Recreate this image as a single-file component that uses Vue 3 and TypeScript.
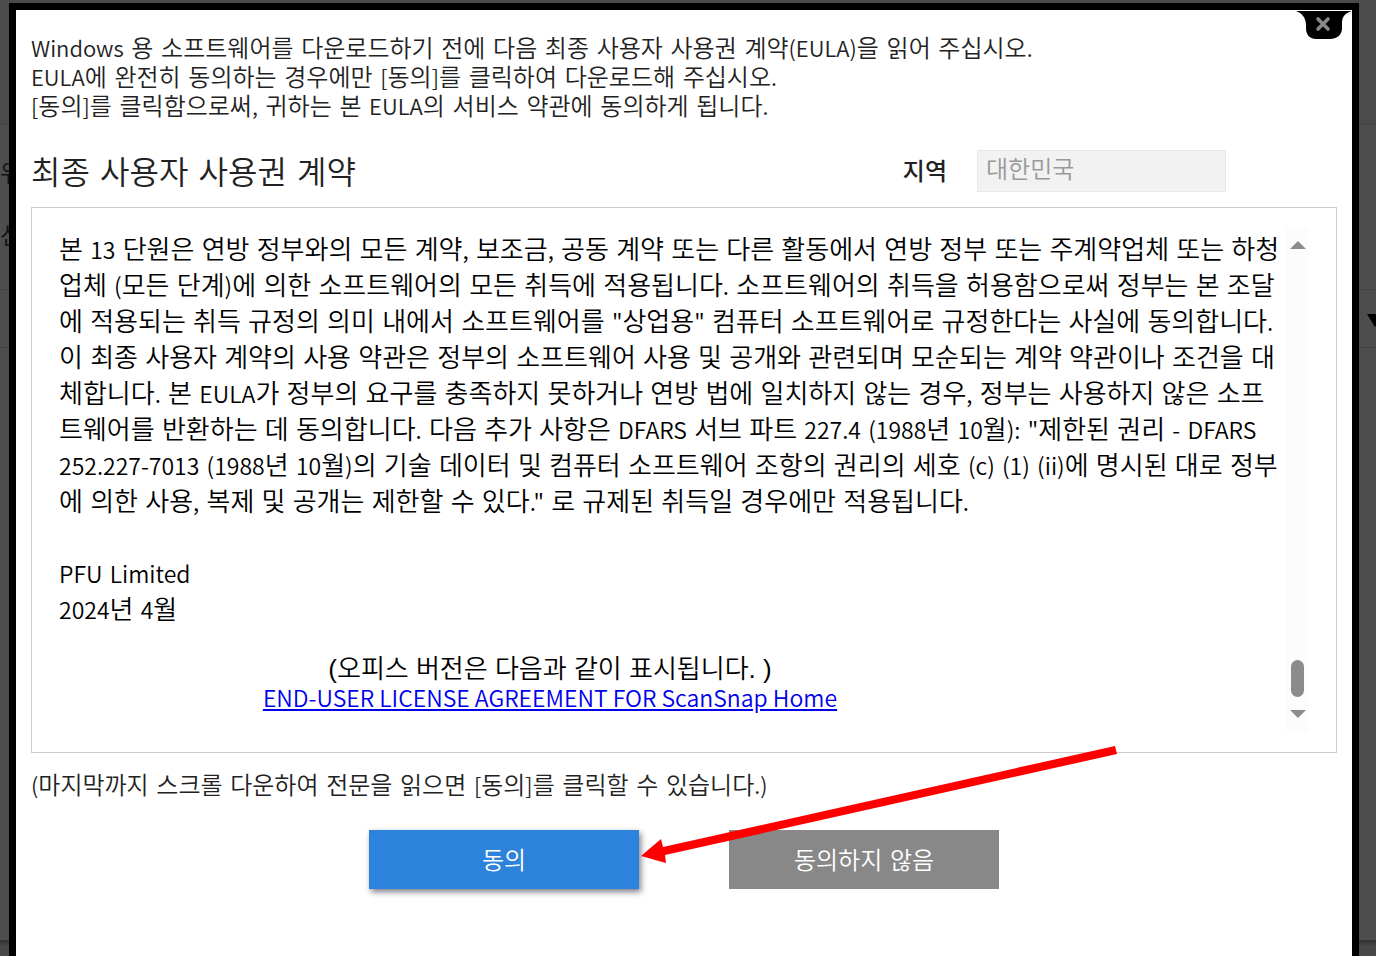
<script setup lang="ts">
import { ref } from 'vue'

interface Run {
  text: string
  latin: boolean
}

// Splits a line into Hangul and Latin runs so each script gets its own size.
function toRuns(line: string): Run[] {
  return (line.match(/[\uAC00-\uD7A3\s]+|[^\uAC00-\uD7A3\s]+/g) ?? []).map((text) => ({
    text,
    latin: !/[\uAC00-\uD7A3\s]/.test(text),
  }))
}

const introLines = [
  'Windows 용 소프트웨어를 다운로드하기 전에 다음 최종 사용자 사용권 계약(EULA)을 읽어 주십시오.',
  'EULA에 완전히 동의하는 경우에만 [동의]를 클릭하여 다운로드해 주십시오.',
  '[동의]를 클릭함으로써, 귀하는 본 EULA의 서비스 약관에 동의하게 됩니다.',
].map(toRuns)

const agreementLines = [
  '본 13 단원은 연방 정부와의 모든 계약, 보조금, 공동 계약 또는 다른 활동에서 연방 정부 또는 주계약업체 또는 하청',
  '업체 (모든 단계)에 의한 소프트웨어의 모든 취득에 적용됩니다. 소프트웨어의 취득을 허용함으로써 정부는 본 조달',
  '에 적용되는 취득 규정의 의미 내에서 소프트웨어를 "상업용" 컴퓨터 소프트웨어로 규정한다는 사실에 동의합니다.',
  '이 최종 사용자 계약의 사용 약관은 정부의 소프트웨어 사용 및 공개와 관련되며 모순되는 계약 약관이나 조건을 대',
  '체합니다. 본 EULA가 정부의 요구를 충족하지 못하거나 연방 법에 일치하지 않는 경우, 정부는 사용하지 않은 소프',
  '트웨어를 반환하는 데 동의합니다. 다음 추가 사항은 DFARS 서브 파트 227.4 (1988년 10월): "제한된 권리 - DFARS',
  '252.227-7013 (1988년 10월)의 기술 데이터 및 컴퓨터 소프트웨어 조항의 권리의 세호 (c) (1) (ii)에 명시된 대로 정부',
  '에 의한 사용, 복제 및 공개는 제한할 수 있다." 로 규제된 취득일 경우에만 적용됩니다.',
].map(toRuns)

const signatureLines = ['PFU Limited', '2024년 4월'].map(toRuns)
const noteLine = toRuns('(마지막까지 스크롤 다운하여 전문을 읽으면 [동의]를 클릭할 수 있습니다.)')

const region = ref('대한민국')
</script>

<template>
  <div class="screen">
    <div class="page" aria-hidden="true">
      <div class="page-top"></div>
      <div class="page-body">
        <div class="page-words"><span>위</span><span>선</span></div>
        <div class="page-row"><i class="caret"></i></div>
      </div>
      <div class="page-foot"></div>
    </div>

    <main class="dialog" role="dialog" aria-labelledby="eula-title">
      <button class="close" type="button" aria-label="닫기">
        <svg width="56" height="29" viewBox="0 0 56 29">
          <path d="M0 0H56C49 2 46 6 46 12V17C46 24 41 28 34 28H20C14 28 10 24 10 17V14C10 7 6 2 0 0Z" fill="#000" />
          <path d="M22 8L32 18M32 8L22 18" stroke="#888" stroke-width="3.6" stroke-linecap="round" />
        </svg>
      </button>

      <p class="intro">
        <span v-for="(line, i) in introLines" :key="i" class="line"><span v-for="(run, j) in line" :key="j" :class="{ latin: run.latin }">{{ run.text }}</span></span>
      </p>

      <div class="heading">
        <h1 id="eula-title">최종 사용자 사용권 계약</h1>
        <div class="region">
          <label for="region">지역</label>
          <select id="region" v-model="region" disabled>
            <option>대한민국</option>
          </select>
        </div>
      </div>

      <section class="agreement">
        <div class="text">
          <p>
            <span v-for="(line, i) in agreementLines" :key="i" class="line"><span v-for="(run, j) in line" :key="j" :class="{ latin: run.latin }">{{ run.text }}</span></span>
          </p>
          <p class="signature">
            <span v-for="(line, i) in signatureLines" :key="i" class="line"><span v-for="(run, j) in line" :key="j" :class="{ latin: run.latin }">{{ run.text }}</span></span>
          </p>
          <p class="office">
            <span class="line">(오피스 버전은 다음과 같이 표시됩니다. )</span>
            <a href="#eula">END-USER LICENSE AGREEMENT FOR ScanSnap Home</a>
          </p>
        </div>
        <div class="scrollbar">
          <button class="up" type="button" aria-label="위로 스크롤"></button>
          <div class="thumb"></div>
          <button class="down" type="button" aria-label="아래로 스크롤"></button>
        </div>
      </section>

      <p class="note line"><span v-for="(run, j) in noteLine" :key="j" :class="{ latin: run.latin }">{{ run.text }}</span></p>

      <div class="actions">
        <button class="agree" type="button">동의</button>
        <button class="decline" type="button">동의하지 않음</button>
        <svg class="arrow" width="478" height="118" viewBox="0 0 478 118" aria-hidden="true">
          <path d="M1 110L21 93L23 101L475 0L477 8L25 109L26 117Z" fill="#f00" />
        </svg>
      </div>
    </main>
  </div>
</template>

<style>
body {
  margin: 0;
  background: #4d4d4d;
}
</style>

<style scoped>
.screen {
  position: relative;
  min-height: 100vh;
  box-sizing: border-box;
  padding: 3px 17px 0 9px;
  overflow: hidden;
  font-family: "DejaVu Sans", "Noto Sans CJK KR", sans-serif;
  font-size: 24px;
  font-weight: 350;
  color: #222;
}

.page {
  position: absolute;
  inset: 0;
  display: flex;
  flex-direction: column;
  background: #4d4d4d;
}

.page-top {
  height: 123px;
  background: #4b4b4b;
  border-bottom: 2px solid #464646;
}

.page-body {
  flex: 1;
}

.page-words {
  height: 164px;
  box-sizing: border-box;
  padding-top: 18px;
  display: flex;
  flex-direction: column;
  line-height: 62px;
  color: #111;
}

.page-row {
  display: flex;
  justify-content: flex-end;
  align-items: center;
  height: 57px;
  border-top: 1px solid #444;
  border-bottom: 1px solid #444;
}

.caret {
  margin: 4px -7px 0 0;
  border: 8px solid transparent;
  border-top: 13px solid #000;
  border-bottom: 0;
}

.page-foot {
  height: 16px;
  background: linear-gradient(#2e2f31, #474747 6px, #4a4848);
}

.dialog {
  position: relative;
  min-height: calc(100vh - 3px);
  box-sizing: border-box;
  padding: 25px 15px 0;
  border: 7px solid #000;
  border-bottom: 0;
  background: #fff;
}

p,
h1 {
  margin: 0;
  font-weight: inherit;
}

.line {
  display: block;
  white-space: nowrap;
}

.latin {
  font-family: "Noto Sans CJK KR", sans-serif;
  font-size: 22px;
  line-height: 1;
}

button {
  padding: 0;
  border: 0;
  background: none;
  font: inherit;
  cursor: pointer;
}

.close {
  position: absolute;
  top: 1px;
  right: 0;
}

.close svg {
  display: block;
  fill: none;
}

.intro {
  line-height: 29px;
}

.heading {
  display: flex;
  justify-content: space-between;
  align-items: center;
  margin-top: 28px;
  padding-right: 111px;
}

h1 {
  padding-top: 4px;
  font-size: 32px;
  line-height: 38px;
}

.region {
  display: flex;
  align-items: center;
  gap: 30px;
}

.region label {
  padding-bottom: 4px;
  font-weight: 500;
}

select {
  width: 249px;
  height: 42px;
  padding: 0 8px 2px;
  border: 1px solid #e8e8e8;
  border-radius: 0;
  background: #f2f2f2;
  color: #999;
  font: inherit;
  opacity: 1;
  appearance: none;
}

.agreement {
  display: flex;
  justify-content: space-between;
  margin-top: 15px;
  padding: 19px 27px 20px;
  border: 1px solid #ccc;
  color: #000;
}

.text {
  flex: 1;
  min-width: 0;
  padding: 5px 0 21px;
  font-family: "Liberation Sans", "Noto Sans CJK KR", sans-serif;
  font-size: 26px;
  line-height: 36px;
}

.text .latin {
  font-size: 23px;
}

.signature {
  margin-top: 36px;
}

.office {
  width: 982px;
  margin-top: 27px;
  line-height: 28px;
  text-align: center;
}

.office a {
  display: block;
  font-family: "Noto Sans CJK KR", sans-serif;
  font-size: 23px;
  color: #00e;
}

.scrollbar {
  display: flex;
  flex-direction: column;
  align-items: center;
  width: 23px;
  box-sizing: border-box;
  padding: 14px 0;
  background: #fcfcfc;
}

.up,
.down {
  border: 8px solid transparent;
}

.up {
  border-top: 0;
  border-bottom-color: #8b8b8b;
}

.down {
  border-bottom: 0;
  border-top-color: #8b8b8b;
}

.thumb {
  width: 13px;
  height: 37px;
  margin: auto 0 13px;
  border-radius: 7px;
  background: #8b8b8b;
}

.note {
  margin-top: 18px;
  line-height: 30px;
}

.actions {
  position: relative;
  display: flex;
  justify-content: center;
  gap: 90px;
  margin-top: 29px;
}

.actions button {
  width: 270px;
  height: 59px;
  padding-bottom: 2px;
  color: #fff;
}

.actions .agree {
  background: #2d82dc;
  box-shadow: 2px 3px 6px rgba(0, 0, 30, 0.5);
}

.actions .decline {
  background: #888;
}

.arrow {
  position: absolute;
  left: calc(50% - 44px);
  top: -84px;
  pointer-events: none;
}
</style>
